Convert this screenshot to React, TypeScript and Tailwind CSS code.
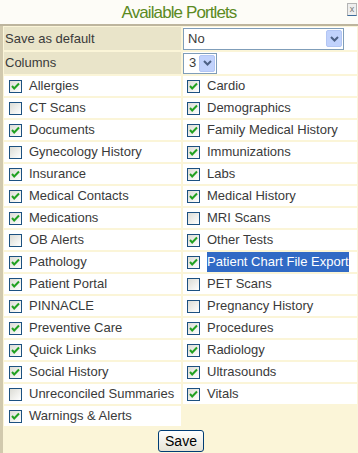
import React from "react";

type Item = { label: string; checked: boolean; selected?: boolean };

const left: Item[] = [
  { label: "Allergies", checked: true },
  { label: "CT Scans", checked: false },
  { label: "Documents", checked: true },
  { label: "Gynecology History", checked: false },
  { label: "Insurance", checked: true },
  { label: "Medical Contacts", checked: true },
  { label: "Medications", checked: true },
  { label: "OB Alerts", checked: false },
  { label: "Pathology", checked: true },
  { label: "Patient Portal", checked: true },
  { label: "PINNACLE", checked: true },
  { label: "Preventive Care", checked: true },
  { label: "Quick Links", checked: true },
  { label: "Social History", checked: true },
  { label: "Unreconciled Summaries", checked: false },
  { label: "Warnings & Alerts", checked: true },
];

const right: Item[] = [
  { label: "Cardio", checked: true },
  { label: "Demographics", checked: true },
  { label: "Family Medical History", checked: true },
  { label: "Immunizations", checked: true },
  { label: "Labs", checked: true },
  { label: "Medical History", checked: true },
  { label: "MRI Scans", checked: false },
  { label: "Other Tests", checked: true },
  { label: "Patient Chart File Export", checked: true, selected: true },
  { label: "PET Scans", checked: false },
  { label: "Pregnancy History", checked: false },
  { label: "Procedures", checked: true },
  { label: "Radiology", checked: true },
  { label: "Ultrasounds", checked: true },
  { label: "Vitals", checked: true },
];

const CheckBox: React.FC<{ checked: boolean }> = ({ checked }) => (
  <span className="block w-[13px] h-[13px] shrink-0 border border-[#1c5180] bg-gradient-to-br from-[#dcdcd5] to-white">
    {checked && (
      <svg width="11" height="11" viewBox="0 0 11 11" className="block">
        <polyline points="2,5 4.2,7.5 9,2.5" fill="none" stroke="#21a121" strokeWidth="2" />
      </svg>
    )}
  </span>
);

const Arrow: React.FC = () => (
  <span className="flex items-center justify-center w-[16px] h-[17px] rounded-[2px] bg-[#c1d2fc] border border-[#b3c6f4]">
    <svg width="9" height="6" viewBox="0 0 9 6">
      <polyline points="1,1 4.5,4.5 8,1" fill="none" stroke="#4d6185" strokeWidth="2" />
    </svg>
  </span>
);

const Row: React.FC<{ item: Item; pad: string }> = ({ item, pad }) => (
  <div className={`h-[20px] bg-white flex items-center gap-[7px] ${pad}`}>
    <CheckBox checked={item.checked} />
    <span
      className={
        item.selected
          ? "h-[20px] leading-[20px] bg-[#316ac5] text-white"
          : "leading-[20px]"
      }
    >
      {item.label}
    </span>
  </div>
);

export default function App() {
  return (
    <div className="w-[358px] h-[453px] bg-[#fbf5d8] font-['Liberation_Sans',Arial,sans-serif] text-[13px] text-[#3a3a3a] overflow-hidden">
      <div className="relative h-[24px] bg-[#fdfcf7] flex items-center justify-center">
        <span className="text-[17px] tracking-[-0.9px] font-light text-[#5b8a1f] leading-none">Available Portlets</span>
        <span className="absolute right-[1px] top-[3px] w-[10px] h-[13px] border border-[#b4b4b4] border-b-[#3e6c9c] bg-[#eeeeee] text-[9px] leading-[10px] text-[#777] text-center">
          x
        </span>
      </div>
      <div className="h-[2px] bg-[#bdb59e]" />
      <div className="h-[427px] border-l-[3px] border-[#d1c9ad] pl-[1px] pt-[1px]">
        <div className="grid grid-cols-[177px_174px] gap-[2px]">
          <div className="h-[23px] bg-[#e9e4c9] flex items-center pl-[1px]">Save as default</div>
          <div className="h-[23px] bg-white flex items-center">
            <div className="w-[161px] h-[22px] border border-[#7f9db9] flex items-center justify-between pl-[4px] pr-[1px]">
              <span>No</span>
              <Arrow />
            </div>
          </div>
          <div className="h-[22px] bg-[#e9e4c9] flex items-center pl-[1px]">Columns</div>
          <div className="h-[22px] bg-white flex items-center">
            <div className="w-[34px] h-[21px] border border-[#7f9db9] flex items-center justify-between pl-[5px] pr-[1px]">
              <span>3</span>
              <Arrow />
            </div>
          </div>
        </div>
        <div className="grid grid-cols-[177px_174px] gap-[2px] mt-[2px]">
          {left.map((item, i) => (
            <React.Fragment key={item.label}>
              <Row item={item} pad="pl-[5px]" />
              {right[i] ? <Row item={right[i]} pad="pl-[4px]" /> : <div />}
            </React.Fragment>
          ))}
        </div>
        <div className="flex justify-center mt-[4px]">
          <button className="w-[46px] h-[22px] rounded-[3px] border border-[#003c74] bg-gradient-to-b from-white to-[#e6e3d6] text-[14px] text-black leading-none">
            Save
          </button>
        </div>
      </div>
    </div>
  );
}
